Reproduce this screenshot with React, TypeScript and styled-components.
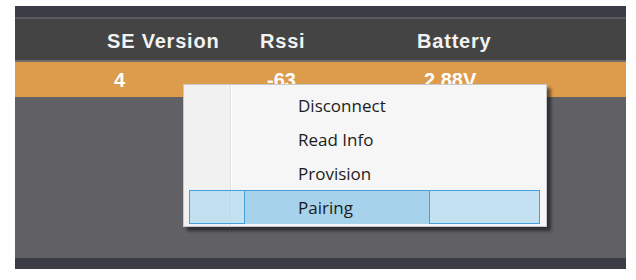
import styled, { createGlobalStyle } from 'styled-components';

// ============================================================================
// Styled Components
// ============================================================================

const GlobalStyle = createGlobalStyle`
  html, body {
    margin: 0;
    padding: 0;
    background: #ffffff;
  }
`;

const Frame = styled.div`
  position: relative;
  width: 611px;
  margin: 6px 0 0 15px;
  font-family: 'Liberation Sans', Arial, sans-serif;
`;

const Strip = styled.div<{ $edge?: boolean }>`
  height: 11px;
  background: #3c3c46;
  border-bottom: ${(p) => (p.$edge ? '2px solid #5a5a5f' : 'none')};
`;

const Columns = styled.div`
  display: grid;
  grid-template-columns: 92px 153px 157px 1fr;
  align-items: center;
  box-sizing: border-box;
`;

const HeaderRow = styled(Columns)`
  height: 43px;
  padding-top: 4px;
  background: #444444;
  border-bottom: 2px solid #6e6e6e;
`;

const HeaderCell = styled.div`
  color: #f2f2f2;
  font-size: 20px;
  font-weight: bold;
  letter-spacing: 0.8px;
  white-space: nowrap;
`;

const DataRow = styled(Columns)`
  height: 35px;
  padding-top: 2px;
  background: #dd9b4c;
`;

const DataCell = styled.div`
  padding-left: 7px;
  color: #ffffff;
  font-size: 20px;
  font-weight: bold;
  white-space: nowrap;
`;

const Body = styled.div`
  height: 161px;
  background: #606065;
`;

const Menu = styled.div`
  position: absolute;
  left: 168px;
  top: 78px;
  width: 364px;
  box-sizing: border-box;
  padding: 3px 6px 2px 5px;
  border: 1px solid #c8c8c8;
  background: linear-gradient(
    to right,
    #f1f1f1 0 46px,
    #dedede 46px 47px,
    #ffffff 47px 48px,
    #f6f6f6 48px
  );
  box-shadow: 4px 4px 3px rgba(0, 0, 0, 0.5);
  font-family: 'Open Sans', 'Noto Sans', sans-serif;
`;

const Item = styled.div<{ $active?: boolean }>`
  display: grid;
  grid-template-columns: 54px 186px 1fr;
  height: 34px;
  box-sizing: border-box;
  border: 1px solid ${(p) => (p.$active ? '#44a0dc' : 'transparent')};
  background: ${(p) => (p.$active ? 'rgba(176, 216, 238, 0.72)' : 'transparent')};
`;

const ItemLabel = styled.div<{ $active?: boolean }>`
  padding: 1px 0 0 53px;
  line-height: 32px;
  font-size: 17px;
  color: #1c1c1c;
  white-space: nowrap;
  border-left: 1px solid ${(p) => (p.$active ? '#44a0dc' : 'transparent')};
  border-right: 1px solid ${(p) => (p.$active ? '#44a0dc' : 'transparent')};
  background: ${(p) => (p.$active ? '#a6d2ec' : 'transparent')};
`;

// ============================================================================
// Component
// ============================================================================

const items = ['Disconnect', 'Read Info', 'Provision', 'Pairing'];

export default function App() {
  return (
    <>
      <GlobalStyle />
      <Frame>
        <Strip $edge />
        <HeaderRow>
          <HeaderCell />
          <HeaderCell>SE Version</HeaderCell>
          <HeaderCell>Rssi</HeaderCell>
          <HeaderCell>Battery</HeaderCell>
        </HeaderRow>
        <DataRow>
          <DataCell />
          <DataCell>4</DataCell>
          <DataCell>-63</DataCell>
          <DataCell>2.88V</DataCell>
        </DataRow>
        <Body />
        <Strip />

        <Menu role="menu">
          {items.map((label) => {
            const active = label === 'Pairing';
            return (
              <Item key={label} $active={active} role="menuitem">
                <span />
                <ItemLabel $active={active}>{label}</ItemLabel>
                <span />
              </Item>
            );
          })}
        </Menu>
      </Frame>
    </>
  );
}
